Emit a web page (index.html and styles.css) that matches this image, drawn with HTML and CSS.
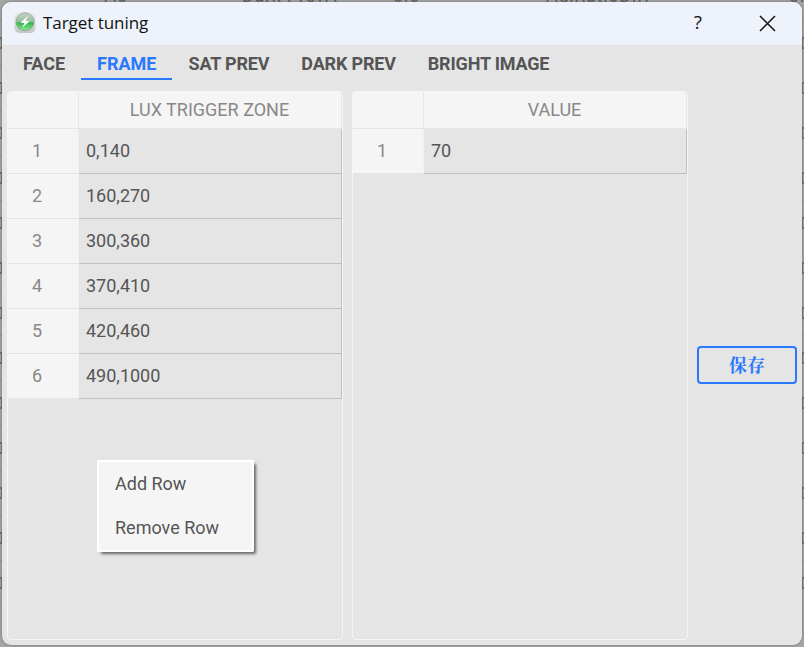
FILE: index.html
```
<!DOCTYPE html>
<html lang="en">
<head>
<meta charset="utf-8">
<title>Target tuning</title>
<link rel="stylesheet" href="styles.css">
</head>
<body>
<div class="backdrop">
  <span class="b1">7,0</span><span class="b2">Dark PrevA</span><span class="b3">0.0</span><span class="b4">AdjRatioDiff</span><span class="b5">0.</span>
</div>
<div class="edge left"><i></i><i></i><i></i><i></i><i></i><i></i><i></i><i></i><i></i><i></i><i></i><i></i><i></i></div>
<div class="edge right"><i></i><i></i><i></i><i></i><i></i><i></i><i></i><i></i><i></i><i></i><i></i><i></i><i></i></div>
<main class="window">
  <header class="titlebar">
    <svg class="logo" width="22" height="23" viewBox="0 0 22 23">
      <defs>
        <linearGradient id="frame" x1="0" y1="0" x2="0" y2="1"><stop offset="0" stop-color="#eeeeee"/><stop offset="1" stop-color="#c4c4c4"/></linearGradient>
        <linearGradient id="orb" x1="0" y1="0" x2="0" y2="1"><stop offset="0" stop-color="#c3d2c6"/><stop offset=".48" stop-color="#9ac0a0"/><stop offset=".55" stop-color="#31b64c"/><stop offset="1" stop-color="#8be895"/></linearGradient>
      </defs>
      <rect x=".5" y=".5" width="21" height="21.5" rx="5.5" fill="url(#frame)"/>
      <circle cx="11" cy="10.8" r="9" fill="url(#orb)" stroke="#909a92" stroke-width=".8"/>
      <path d="M14.5 4.5 6.5 11.7l4 .2-2.4 5 7.4-6.7-4-.3z" fill="#fff"/>
    </svg>
    <h1>Target tuning</h1>
    <span class="help">?</span>
    <svg class="close" width="17" height="17" viewBox="0 0 17 17"><path d="M1 1 16 16M16 1 1 16" fill="none" stroke="#111" stroke-width="1.5"/></svg>
  </header>
  <nav class="tabs">
    <a>FACE</a><a class="active">FRAME</a><a>SAT PREV</a><a>DARK PREV</a><a>BRIGHT IMAGE</a>
  </nav>
  <div class="content">
    <section class="panel">
      <div class="row head"><span class="num"></span><span class="cell">LUX TRIGGER ZONE</span></div>
      <div class="row"><span class="num">1</span><span class="cell">0,140</span></div>
      <div class="row"><span class="num">2</span><span class="cell">160,270</span></div>
      <div class="row"><span class="num">3</span><span class="cell">300,360</span></div>
      <div class="row"><span class="num">4</span><span class="cell">370,410</span></div>
      <div class="row"><span class="num">5</span><span class="cell">420,460</span></div>
      <div class="row last"><span class="num">6</span><span class="cell">490,1000</span></div>
      <div class="menu"><span>Add Row</span><span>Remove Row</span></div>
    </section>
    <section class="panel">
      <div class="row head"><span class="num"></span><span class="cell">VALUE</span></div>
      <div class="row last"><span class="num">1</span><span class="cell">70</span></div>
    </section>
    <button class="save" lang="zh-CN">保存</button>
  </div>
</main>
</body>
</html>
```
FILE: styles.css
```
* { box-sizing: border-box; }
body {
  margin: 0;
  width: 804px;
  height: 647px;
  padding: 2px;
  overflow: hidden;
  position: relative;
  font: 18px Roboto, "Noto Sans CJK SC", sans-serif;
  color: #555;
  background: repeating-linear-gradient(#a5a5a5 0 20px, #919191 20px 21px, #a5a5a5 21px 45px);
}
.backdrop {
  position: absolute;
  top: -14px;
  left: 0;
  right: 0;
  height: 20px;
  line-height: 20px;
  color: #555;
  white-space: nowrap;
  letter-spacing: .7px;
}
.backdrop span { position: absolute; top: 0; }
.b1 { left: 102px; }
.b2 { left: 242px; }
.b3 { left: 393px; }
.b4 { left: 546px; }
.b5 { left: 789px; }
.edge {
  position: absolute;
  top: 37px;
  width: 2px;
  display: grid;
  grid-auto-rows: 12px;
  row-gap: 33px;
}
.edge i { border: solid #665850; border-width: 2px 1px 2px 0; opacity: .8; }
.left { left: 0; }
.right { right: 0; }
.right i { border-color: #4d6066; border-width: 2px 0 2px 1px; }
.window {
  position: relative;
  width: 800px;
  height: 643px;
  display: flex;
  flex-direction: column;
  background: #e5e5e5;
  border-radius: 9px;
  overflow: hidden;
  box-shadow: 0 0 3px #707070;
}
.titlebar {
  height: 43px;
  flex: none;
  display: flex;
  align-items: center;
  padding: 0 26px 0 12px;
  background: #eef3fb;
  color: #111;
  font-family: "Open Sans", sans-serif;
}
.logo { margin-top: -3px; }
h1 { margin: -2px auto 0 7px; font-size: 17px; font-weight: 400; letter-spacing: -.05px; }
.help { margin: -3px 57px 0 0; font-size: 19px; }
.tabs { display: flex; height: 35px; margin-left: 5px; flex: none; font-weight: 700; }
.tabs a { padding: 0 16px; line-height: 37px; height: 35px; white-space: nowrap; }
.tabs a:nth-child(n+3) { letter-spacing: -.18px; }
.tabs .active { color: #2979ff; border-bottom: 2px solid #2979ff; }
.content {
  display: grid;
  grid-template-columns: 336px 336px 100px;
  column-gap: 9px;
  height: 549px;
  margin: 11px 0 0 5px;
}
.panel { position: relative; border: 1px solid #f5f5f5; border-radius: 4px; }
.row { display: grid; grid-template-columns: 71px 1fr; height: 45px; line-height: 44px; }
.num { background: #f5f5f5; color: #888; text-align: center; padding-right: 12px; border-bottom: 1px solid #e5e5e5; border-right: 1px solid #f0f0f0; }
.cell { padding-left: 7px; border-right: 1px solid #c0c0c0; border-bottom: 1px solid #c0c0c0; }
.head { height: 37px; line-height: 36px; background: #f5f5f5; border-radius: 3px 3px 0 0; }
.head .num { border-right-color: #e5e5e5; border-top-left-radius: 3px; }
.head .cell { padding: 0 1px 0 0; text-align: center; color: #888; border-color: #e5e5e5; }
.menu {
  position: absolute;
  left: 89px;
  top: 368px;
  width: 157px;
  height: 92px;
  padding: 2px 2px 2px 18px;
  display: flex;
  flex-direction: column;
  border-radius: 2px;
  background: #f5f5f5;
  box-shadow: inset 0 0 0 2px #fff, 3px 3px 3px -1px #666;
}
.menu span { height: 44px; line-height: 43px; }
.save {
  align-self: start;
  justify-self: start;
  margin: 255px 0 0;
  width: 100px;
  height: 38px;
  padding: 0 0 2px;
  border: 2px solid #2979ff;
  border-radius: 4px;
  background: transparent;
  color: #2979ff;
  font: 700 18px/30px "Noto Serif CJK SC", "Noto Sans CJK SC", serif;
}
```
